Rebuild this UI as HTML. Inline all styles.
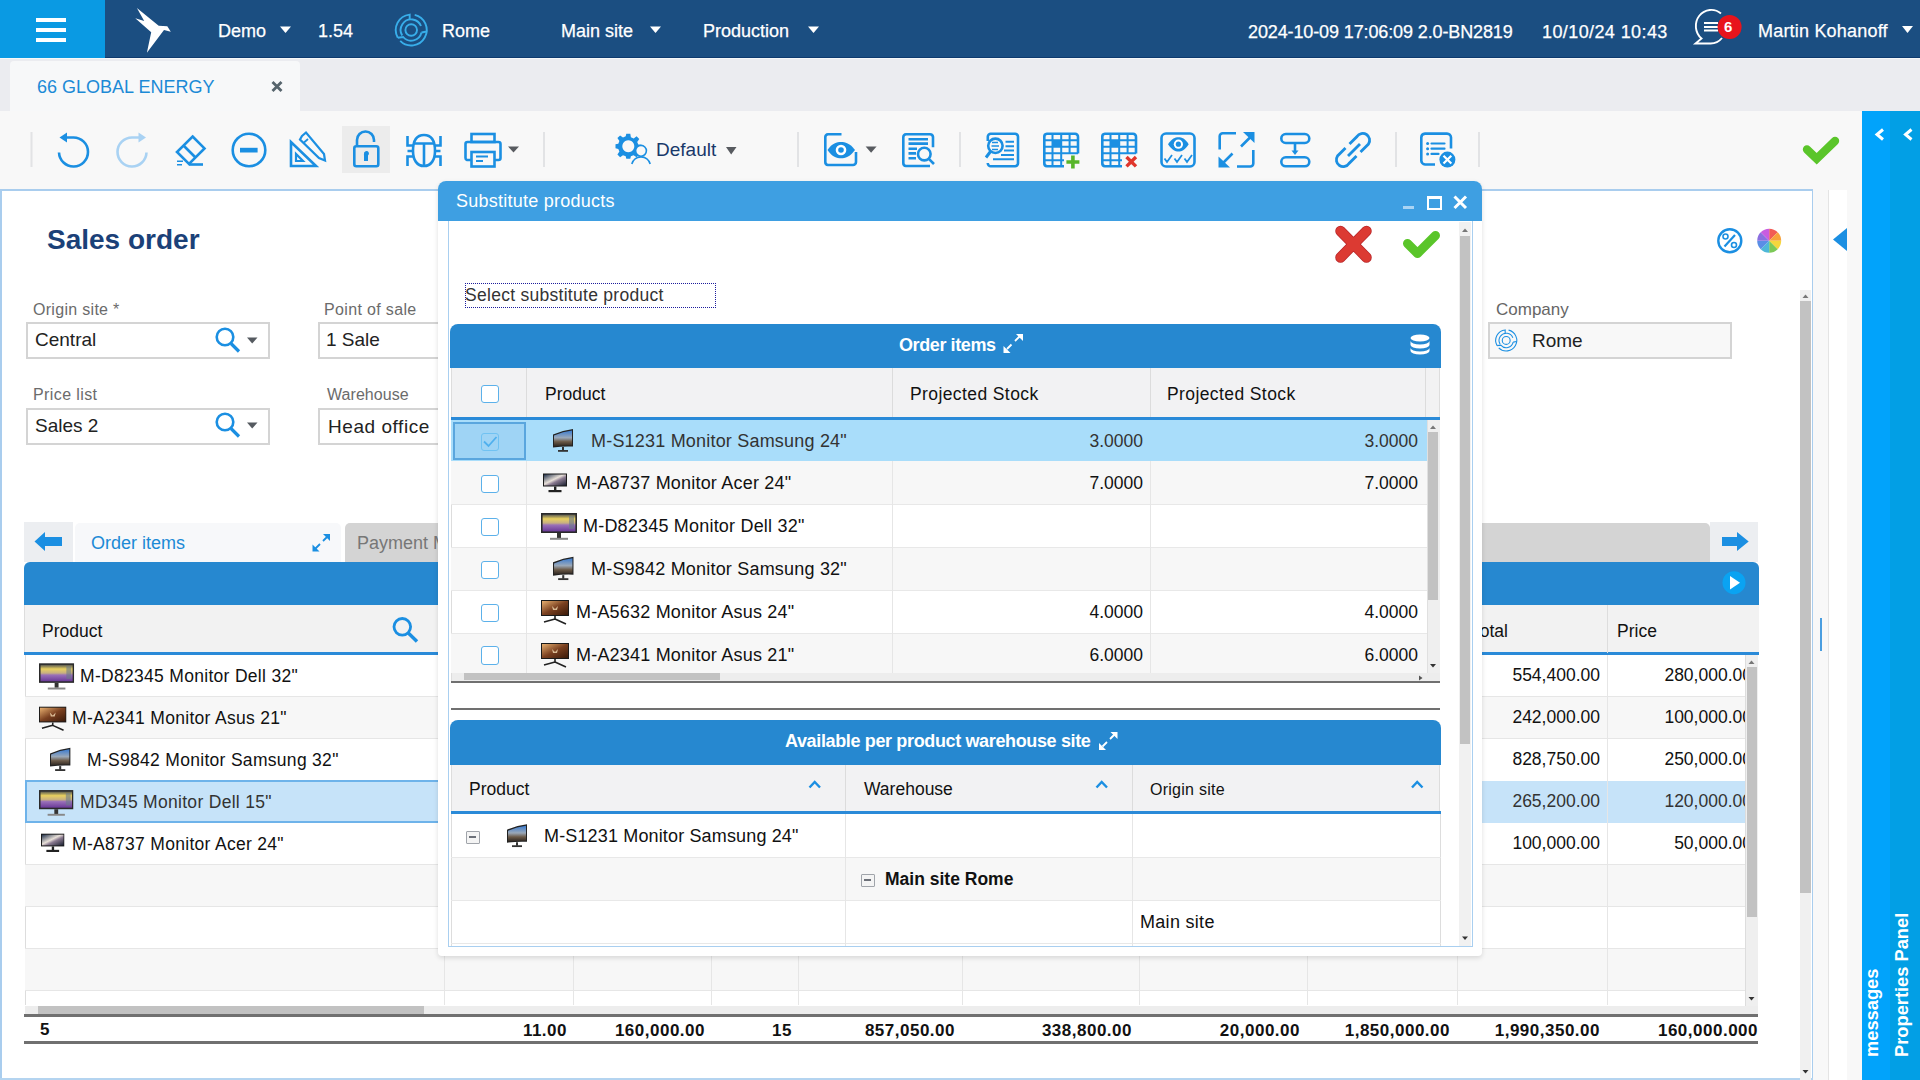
<!DOCTYPE html>
<html><head><meta charset="utf-8">
<style>
*{box-sizing:border-box;margin:0;padding:0}
html,body{width:1920px;height:1080px;overflow:hidden;background:#f7f7f7;font-family:"Liberation Sans",sans-serif;color:#222}
.a{position:absolute}
.t{position:absolute;white-space:nowrap;line-height:1}
.w{-webkit-text-stroke:0.25px #fff}
svg{position:absolute;overflow:visible}
</style></head><body>

<svg width="0" height="0" style="position:absolute">
<defs>
 <linearGradient id="gSam" x1="0" y1="0" x2="0" y2="1"><stop offset="0" stop-color="#3a7bd0"/><stop offset="0.45" stop-color="#9aa8b8"/><stop offset="0.7" stop-color="#6b5a48"/><stop offset="1" stop-color="#2a2420"/></linearGradient>
 <linearGradient id="gAcer" x1="0" y1="0" x2="1" y2="1"><stop offset="0" stop-color="#20304a"/><stop offset="0.45" stop-color="#e8e0d8"/><stop offset="0.6" stop-color="#8a7a90"/><stop offset="1" stop-color="#1a2030"/></linearGradient>
 <linearGradient id="gDell" x1="0" y1="0" x2="0" y2="1"><stop offset="0" stop-color="#5a5a50"/><stop offset="0.25" stop-color="#e8d060"/><stop offset="0.5" stop-color="#c8b080"/><stop offset="0.62" stop-color="#9a70b8"/><stop offset="1" stop-color="#6a3a98"/></linearGradient>
 <linearGradient id="gAsus" x1="0" y1="0" x2="1" y2="1"><stop offset="0" stop-color="#e8b070"/><stop offset="0.5" stop-color="#7a4020"/><stop offset="1" stop-color="#3a1a0a"/></linearGradient>
 <symbol id="mSam" viewBox="0 0 22 24"><path d="M1,5.5 Q11,1 21,0 L21,17.5 Q11,17 1,18.5 Z" fill="#222"/><path d="M2,6.5 Q11,2.5 20,1.5 L20,16.5 Q11,16.2 2,17.5 Z" fill="url(#gSam)"/><rect x="10" y="18" width="2" height="3.5" fill="#333"/><rect x="6" y="21" width="10" height="1.8" fill="#333"/></symbol>
 <symbol id="mAcer" viewBox="0 0 24 24"><rect x="0" y="3" width="24" height="13" fill="#1a1a1a"/><rect x="1" y="4" width="22" height="11" fill="url(#gAcer)"/><rect x="11" y="16" width="2.4" height="4" fill="#222"/><rect x="5.5" y="19.5" width="13" height="2.2" fill="#222"/></symbol>
 <symbol id="mDell" viewBox="0 0 36 27"><rect x="0" y="0" width="36" height="20" fill="#2a2a2a"/><rect x="1.6" y="1.6" width="32.8" height="16.8" fill="url(#gDell)"/><rect x="28" y="3" width="5" height="13" fill="#6a7a88" opacity="0.6"/><rect x="16" y="20" width="4" height="5" fill="#333"/><rect x="9" y="24.8" width="18" height="2" fill="#888"/></symbol>
 <symbol id="mAsus" viewBox="0 0 28 27"><rect x="0" y="2" width="28" height="16" fill="#1a1a1a"/><rect x="1" y="3" width="26" height="14" fill="url(#gAsus)"/><path d="M11,8 L14,11 L17,8 L16,12 L12,12 Z" fill="#f0d8b0" opacity="0.8"/><path d="M14,18 L14,21 M14,21 L3,24 M14,21 L25,26" stroke="#222" stroke-width="1.6"/></symbol>
</defs></svg>
<!-- TOP BAR -->
<div class="a" style="left:0;top:0;width:1920px;height:58px;background:#1b4e81"></div>
<div class="a" style="left:105px;top:57px;width:1815px;height:1px;background:#0e3a6e"></div>
<div class="a" style="left:0;top:0;width:105px;height:58px;background:#0a9ae3"></div>
<div class="a" style="left:36px;top:18px;width:30px;height:3.5px;background:#fff"></div>
<div class="a" style="left:36px;top:28px;width:30px;height:3.5px;background:#fff"></div>
<div class="a" style="left:36px;top:38px;width:30px;height:3.5px;background:#fff"></div>
<svg style="left:0;top:0" width="200" height="58"><path d="M136.9,8.1 L158.7,25.8 L167.3,26.3 L170.8,31.7 L164,30.1 L146.9,52.7 L151.2,32.3 L135.3,18.3 L144.2,21 Z" fill="#fff"/></svg>
<div class="t w" style="left:218px;top:22px;font-size:18px;color:#fff">Demo</div>
<svg style="left:0;top:0" width="1" height="1"><path d="M280,26.5 L291,26.5 L285.5,33 Z" fill="#fff"/></svg>
<div class="t w" style="left:318px;top:22px;font-size:18px;color:#fff">1.54</div>
<div class="t w" style="left:442px;top:22px;font-size:18px;color:#fff">Rome</div>
<div class="t w" style="left:561px;top:22px;font-size:18px;color:#fff">Main site</div>
<svg style="left:0;top:0" width="1" height="1"><path d="M650,26.5 L661,26.5 L655.5,33 Z" fill="#fff"/></svg>
<div class="t w" style="left:703px;top:22px;font-size:18px;color:#fff">Production</div>
<svg style="left:0;top:0" width="1" height="1"><path d="M808,26.5 L819,26.5 L813.5,33 Z" fill="#fff"/></svg>
<div class="t w" style="left:1248px;top:23px;font-size:18px;letter-spacing:-0.12px;color:#fff">2024-10-09 17:06:09 2.0-BN2819</div>
<div class="t w" style="left:1542px;top:23px;font-size:18px;letter-spacing:0.4px;color:#fff">10/10/24 10:43</div>
<div class="t w" style="left:1758px;top:22px;font-size:18px;letter-spacing:0.2px;color:#fff">Martin Kohanoff</div>
<svg style="left:0;top:0" width="1" height="1"><path d="M1902,26 L1913,26 L1907.5,33 Z" fill="#fff"/></svg>


<svg style="left:0;top:0" width="1920" height="58" viewBox="0 0 1920 58">
 <g fill="none" stroke="#38aeea" stroke-width="1.9" transform="translate(411.2,30)">
  <circle r="5.8"/>
  <path d="M3.5,-15.1 A15.5,15.5 0 1 1 -11,10.9"/>
  <path d="M-13.4,7.7 A15.5,15.5 0 0 1 -1.5,-15.4 L-1.5,-10.3"/>
  <path d="M10.3,2.5 A10.6,10.6 0 0 1 -8,7 L-13.4,7.7"/>
  <path d="M-9,5.5 A10.6,10.6 0 0 1 1.5,-10.5 A10.6,10.6 0 0 1 9.8,-4"/>
  <path d="M10.3,2.5 L15.5,1.5"/>
 </g>
 <!-- chat bubble -->
 <path d="M1721,13.5 A14.8,15.5 0 0 0 1701.5,38.5 L1695.5,43.5 L1710,43.5 A15,15.5 0 0 0 1722,38" fill="none" stroke="#fff" stroke-width="1.9"/>
 <path d="M1704,23 L1718,23 M1704,27 L1718,27 M1704,30.5 L1718,30.5" stroke="#fff" stroke-width="2.2"/>
 <circle cx="1729.6" cy="27" r="12" fill="#e8141c"/>
</svg>
<div class="t" style="left:1724px;top:19px;font-size:15px;font-weight:bold;color:#fff">6</div>

<!-- TAB STRIP -->
<div class="a" style="left:0;top:58px;width:1920px;height:53px;background:#ebecf0"></div>
<div class="a" style="left:0;top:58px;width:1920px;height:1px;background:#f6f8f8"></div>
<div class="a" style="left:10px;top:61px;width:290px;height:50px;background:#f7f8f9;border-radius:4px 4px 0 0"></div>
<div class="t" style="left:37px;top:78px;font-size:18px;color:#1c8ad6">66 GLOBAL ENERGY</div>
<svg style="left:0;top:0" width="1" height="1"><path d="M272.5,82 L281.5,91 M281.5,82 L272.5,91" stroke="#56646c" stroke-width="2.8"/></svg>

<!-- TOOLBAR -->
<div class="a" style="left:0;top:111px;width:1862px;height:79px;background:#f8f8f8"></div>


<svg style="left:0;top:0" width="1920" height="200" viewBox="0 0 1920 200">
<g stroke="#e2e3e5" stroke-width="2"><line x1="31.5" y1="132" x2="31.5" y2="167"/><line x1="544" y1="132" x2="544" y2="167"/><line x1="798" y1="132" x2="798" y2="167"/><line x1="960" y1="132" x2="960" y2="167"/><line x1="1396" y1="132" x2="1396" y2="167"/><line x1="1479" y1="132" x2="1479" y2="167"/></g>
<rect x="342" y="126" width="48" height="47" fill="#ececec"/>
<g fill="none" stroke="#1b8fe2" stroke-width="2.6" stroke-linecap="butt">
 <!-- undo -->
 <path d="M66,137.5 L73.5,137.5 A14.5,14.5 0 1 1 59,152.5"/>
 <!-- eraser -->
 <path d="M192.6,136.5 L204.5,148.4 L189,164 L177,152 Z"/>
 <path d="M183.5,145.5 L195.5,157.5"/>
 <path d="M189,164.5 L203,164.5"/>
 <!-- minus circle -->
 <circle cx="249" cy="150" r="16.3"/>
 <!-- ruler pencil -->
 <path d="M291,142 L291,166 L316,166 Z"/>
 <path d="M296,154 L296,161 L303,161 Z" stroke-width="2.2"/>
 <path d="M302,136 L306,132.5 L324,154 L325,160.5 L319,158 L300,139.5 Z" stroke-width="2.2"/>
 <path d="M304,142.5 L308,139" stroke-width="1.8"/>
 <!-- lock -->
 <path d="M357,146 L357,140 A8.5,8.5 0 0 1 374,140 L374,142"/>
 <rect x="354.3" y="146.3" width="24" height="20" rx="2"/>
 <!-- bug -->
 <path d="M424,135 C432,135 435,142 435,151 C435,160 431,166 424,166 C417,166 413,160 413,151 C413,142 416,135 424,135 Z"/>
 <path d="M413.5,143.5 L434.5,143.5 M424,143.5 L424,166"/>
 <path d="M407.5,136 L407.5,145.5 L413.5,145.5 M440.5,136 L440.5,145.5 L434.5,145.5 M407.5,151 L413,151 M435,151 L440.5,151 M407.5,166 L407.5,156.5 L413.5,156.5 M440.5,166 L440.5,156.5 L434.5,156.5"/>
 <!-- printer -->
 <rect x="471.5" y="134" width="23" height="8"/>
 <path d="M471,160 L467,160 A2,2 0 0 1 465.5,158 L465.5,144 A2,2 0 0 1 467.5,142 L498.5,142 A2,2 0 0 1 500.5,144 L500.5,158 A2,2 0 0 1 498.5,160 L495,160"/>
 <rect x="471.5" y="152" width="23" height="14.5"/>
 <path d="M476,156.5 L488,156.5 M476,161 L483,161" stroke-width="1.8"/>
 <!-- eye box -->
 <path d="M841.5,134.3 L828,134.3 A3,3 0 0 0 825.3,137 L825.3,162 A3,3 0 0 0 828,165 L853,165 A3,3 0 0 0 856,162 L856,152"/>
 <!-- doc search -->
 <path d="M930,166 L906,166 A3,3 0 0 1 903.3,163 L903.3,137 A3,3 0 0 1 906,134.3 L930,134.3 A3,3 0 0 1 933,137 L933,147.3"/>
 <path d="M908.5,139.2 L928,139.2 M908.5,143.6 L928,143.6 M908.5,148.7 L917,148.7 M908.5,153.4 L916,153.4 M908.5,158.2 L916,158.2"/>
 <circle cx="924.3" cy="154.1" r="6.3"/>
 <path d="M928.8,158.8 L934,164"/>
 <!-- search doc -->
 <path d="M987.8,141 L987.8,137 A3,3 0 0 1 991,133.8 L1015,133.8 A3,3 0 0 1 1018,137 L1018,163 A3,3 0 0 1 1015,166.2 L991,166.2 A3,3 0 0 1 987.8,163"/>
 <circle cx="995.4" cy="145.8" r="7.2"/>
 <path d="M990.5,151.5 L986,157.5" stroke-width="3"/>
 <path d="M992,142.5 L998,142.5 M991.5,146 L999,146 M992,149.5 L998,149.5" stroke-width="1.6"/>
 <path d="M1005.5,141.8 L1014,141.8 M1005.5,146.2 L1014,146.2 M1004,150.6 L1014,150.6 M1001,155 L1014,155 M993,159.2 L1014,159.2" stroke-width="2"/>
 <!-- grid plus -->
 <path d="M1064,166.2 L1047,166.2 A3,3 0 0 1 1044.3,163 L1044.3,137 A3,3 0 0 1 1047,133.8 L1075,133.8 A3,3 0 0 1 1078,137 L1078,153.5"/>
 <path d="M1052.5,134 L1052.5,166 M1061.2,134 L1061.2,166 M1069.6,134 L1069.6,153.5 M1044.5,140.3 L1078,140.3 M1044.5,146.8 L1078,146.8 M1044.5,153.3 L1078,153.3 M1044.5,160.2 L1064,160.2" stroke-width="2"/>
 <!-- grid x -->
 <path d="M1122,166.2 L1105,166.2 A3,3 0 0 1 1102.3,163 L1102.3,137 A3,3 0 0 1 1105,133.8 L1133,133.8 A3,3 0 0 1 1136,137 L1136,153.5"/>
 <path d="M1110.5,134 L1110.5,166 M1119.2,134 L1119.2,166 M1127.6,134 L1127.6,153.5 M1102.5,140.3 L1136,140.3 M1102.5,146.8 L1136,146.8 M1102.5,153.3 L1136,153.3 M1102.5,160.2 L1122,160.2" stroke-width="2"/>
 <!-- eye check -->
 <rect x="1161.5" y="133.5" width="33" height="33" rx="4.5"/>
 <path d="M1164.5,158.5 L1167,162 L1172,155 M1174.5,158.5 L1177,162 L1182,155 M1184.5,158.5 L1187,162 L1192,155" stroke-width="1.8"/>
 <!-- expand -->
 <path d="M1219.7,149.5 L1219.7,136 A3,3 0 0 1 1223,133.2 L1236,133.2"/>
 <path d="M1253.3,150 L1253.3,163.5 A3,3 0 0 1 1250,166.5 L1237,166.5"/>
 <path d="M1241,146.5 L1250,137.5 M1232.5,153.5 L1223.5,162.5"/>
 <!-- flow -->
 <rect x="1281.3" y="134" width="28" height="9" rx="4.5"/>
 <rect x="1281.3" y="157.3" width="28" height="9" rx="4.5"/>
 <path d="M1295,143.6 L1295,151"/>
 <!-- link -->
 <path d="M1349.5,144 L1357,136.5 A5.5,5.5 0 0 1 1368.5,144 L1360.5,152" stroke-width="2.8"/>
 <path d="M1356.5,156 L1349,163.5 A5.5,5.5 0 0 1 1337.5,156 L1345.5,148" stroke-width="2.8"/>
 <path d="M1348,156 L1360,144" stroke-width="2.8"/>
 <!-- list x -->
 <path d="M1435,164.5 L1425,164.5 A4,4 0 0 1 1421.3,160.5 L1421.3,137.5 A4,4 0 0 1 1425,133.6 L1447,133.6 A4,4 0 0 1 1451,137.5 L1451,148.5"/>
 <path d="M1431.5,143.5 L1444.5,143.5 M1431.5,148.7 L1444.5,148.7 M1431.5,153.9 L1438.5,153.9" stroke-width="2.2" stroke-linecap="round"/>
</g>
<g fill="#1b8fe2">
 <path d="M59.5,137.5 L67,132.5 L67,142.5 Z"/>
 <rect x="240" y="147.8" width="17.6" height="4.7"/>
 <path d="M177,160.5 L183,160.5 L183,162 L177,162 Z M177,164 L182,164 L182,165.5 L177,165.5 Z"/>
 <path d="M364,154 A2.5,2.5 0 1 1 368,155.5 L368,161 L364,161 L364,155.5 A2.5,2.5 0 0 1 364,154 Z"/>
 <path d="M827.5,150 C832,143 837,142 841,142 C845,142 850,143 855,150 C850,157 845,158.2 841,158.2 C837,158.2 832,157 827.5,150 Z"/>
 <rect x="1053" y="140.5" width="8" height="6.2"/>
 <rect x="1111" y="140.5" width="8" height="6.2"/>
 <path d="M1168,144.2 C1172,138.5 1175,137.3 1178.4,137.3 C1182,137.3 1185,138.5 1188.7,144.2 C1185,150 1182,151.4 1178.4,151.4 C1175,151.4 1172,150 1168,144.2 Z"/>
 <path d="M1254.5,132 L1254.5,143 L1243,132 Z"/>
 <path d="M1218.5,167.5 L1218.5,156.5 L1230,167.5 Z"/>
 <path d="M1291.5,150.5 L1298.5,150.5 L1295,155 Z"/>
 <circle cx="1427.6" cy="143.5" r="1.5"/><circle cx="1427.6" cy="148.7" r="1.5"/><circle cx="1427.6" cy="153.9" r="1.5"/>
 <circle cx="1447.4" cy="159.6" r="8"/>
</g>
<g fill="#fff">
 <circle cx="841" cy="150" r="5.3"/>
 <circle cx="1178.4" cy="144.2" r="4.6"/>
</g>
<g fill="#1b8fe2"><circle cx="841" cy="150" r="2.8"/><circle cx="1178.4" cy="144.2" r="2.6"/></g>
<path d="M1443.5,155.7 L1451.3,163.5 M1451.3,155.7 L1443.5,163.5" stroke="#fff" stroke-width="2.2"/>
<!-- plus / x colored -->
<path d="M1072.9,155.5 L1072.9,168.5 M1066.4,162 L1079.4,162" stroke="#58b52a" stroke-width="3.6"/>
<path d="M1126.5,157 L1136,166.4 M1136,157 L1126.5,166.4" stroke="#e0362c" stroke-width="3.4"/>
<!-- redo faded -->
<path d="M139.5,137.5 L132,137.5 A14.5,14.5 0 1 0 146.5,152.5" fill="none" stroke="#a9d2f3" stroke-width="2.6"/>
<path d="M146,137.5 L138.5,132.5 L138.5,142.5 Z" fill="#a9d2f3"/>
<!-- dropdown triangles -->
<g fill="#585b60"><path d="M508,146.4 L519,146.4 L513.5,152.5 Z"/><path d="M726,147 L736.5,147 L731.2,154.5 Z"/><path d="M865.6,146.6 L876.6,146.6 L871.1,152.8 Z"/></g>
<!-- gear person -->
<g transform="translate(628.3,146.3)">
 <path fill="#1b8fe2" fill-rule="evenodd" d="M-2,-12.5 L2,-12.5 L2.6,-9 L5.4,-7.8 L8.3,-10 L11,-7.3 L8.9,-4.4 L10,-1.7 L13,-1.5 L13,2 L10,2.6 L9,5.3 L10.9,8.2 L8.2,10.9 L5.3,8.9 L2.6,10 L2,12.5 L-2,12.5 L-2.6,10 L-5.3,8.9 L-8.2,10.9 L-10.9,8.2 L-8.9,5.3 L-10,2.6 L-12.8,2 L-12.8,-2 L-10,-2.6 L-8.9,-5.3 L-10.9,-8.2 L-8.2,-10.9 L-5.3,-8.9 L-2.6,-10 Z M0,-6 A6,6 0 1 0 0.01,-6 Z"/>
</g>
<circle cx="641" cy="150.8" r="5.4" fill="#f8f8f8" stroke="#1b8fe2" stroke-width="1.6"/>
<path d="M631.8,164 A9.5,9.5 0 0 1 650.2,164" fill="none" stroke="#1b8fe2" stroke-width="1.6"/>
<!-- green check -->
<path d="M1807,149.5 L1816.7,158.7 L1835,141" fill="none" stroke="#5ac52a" stroke-width="8.4" stroke-linecap="round" stroke-linejoin="miter"/>
</svg>
<div class="t" style="left:656px;top:139.5px;font-size:19px;color:#18386a">Default</div>


<!-- MAIN PANEL -->
<div class="a" style="left:0;top:189px;width:1813px;height:891px;background:#fff;border:solid #a9cdee;border-width:2px 1px 0 2px"></div>
<div class="t" style="left:47px;top:226px;font-size:28px;font-weight:bold;color:#1b4178">Sales order</div>
<!-- fields -->
<div class="t" style="left:33px;top:302px;font-size:16px;letter-spacing:0.3px;color:#6b6b6b">Origin site *</div>
<div class="a" style="left:26px;top:322px;width:244px;height:37px;border:2px solid #d4d4d4;background:#fff"></div>
<div class="t" style="left:35px;top:330px;font-size:19px;color:#222">Central</div>
<div class="t" style="left:324px;top:302px;font-size:16px;letter-spacing:0.35px;color:#6b6b6b">Point of sale</div>
<div class="a" style="left:318px;top:322px;width:130px;height:37px;border:2px solid #d4d4d4;border-right:0;background:#fff"></div>
<div class="t" style="left:326px;top:330px;font-size:19px;color:#222">1 Sale</div>
<div class="t" style="left:33px;top:387px;font-size:16px;letter-spacing:0.4px;color:#6b6b6b">Price list</div>
<div class="a" style="left:26px;top:408px;width:244px;height:37px;border:2px solid #d4d4d4;background:#fff"></div>
<div class="t" style="left:35px;top:416px;font-size:19px;color:#222">Sales 2</div>
<div class="t" style="left:327px;top:387px;font-size:16px;letter-spacing:0.05px;color:#6b6b6b">Warehouse</div>
<div class="a" style="left:318px;top:408px;width:130px;height:37px;border:2px solid #d4d4d4;border-right:0;background:#fff"></div>
<div class="t" style="left:328px;top:417px;font-size:19px;letter-spacing:0.55px;color:#222">Head office</div>
<div class="t" style="left:1496px;top:301px;font-size:17px;color:#666">Company</div>
<div class="a" style="left:1488px;top:322px;width:244px;height:37px;border:2px solid #d4d4d4;background:#f8f8f8"></div>
<svg style="left:0;top:0" width="1" height="1"><g fill="none" stroke="#1b8fe2" stroke-width="1.6" transform="translate(1506.2,340.4) scale(0.68)">
  <circle r="5.8"/>
  <path d="M3.5,-15.1 A15.5,15.5 0 1 1 -11,10.9"/>
  <path d="M-13.4,7.7 A15.5,15.5 0 0 1 -1.5,-15.4 L-1.5,-10.3"/>
  <path d="M10.3,2.5 A10.6,10.6 0 0 1 -8,7 L-13.4,7.7"/>
  <path d="M-9,5.5 A10.6,10.6 0 0 1 1.5,-10.5 A10.6,10.6 0 0 1 9.8,-4"/>
  <path d="M10.3,2.5 L15.5,1.5"/>
 </g></svg>
<div class="t" style="left:1532px;top:331px;font-size:19px;color:#222">Rome</div>
<svg style="left:0;top:0" width="1920" height="1080" viewBox="0 0 1920 1080">
 <g fill="none" stroke="#1b8fe2" stroke-width="2.6">
  <circle cx="225" cy="337" r="8.3"/><path d="M231,343.5 L239,351.5" stroke-width="3.2"/>
  <circle cx="225" cy="422" r="8.3"/><path d="M231,428.5 L239,436.5" stroke-width="3.2"/>
 </g>
 <g fill="#555a60"><path d="M247,337.5 L257.5,337.5 L252.2,343.5 Z"/><path d="M247,422.5 L257.5,422.5 L252.2,428.5 Z"/></g>
 <!-- % icon -->
 <circle cx="1729.8" cy="240.7" r="11.5" fill="none" stroke="#1b8fe2" stroke-width="2.4"/>
 <path d="M1735,235 L1724.5,246.5" stroke="#1b8fe2" stroke-width="2.2"/>
 <circle cx="1725.5" cy="236.5" r="2.5" fill="none" stroke="#1b8fe2" stroke-width="1.6"/>
 <circle cx="1734" cy="245" r="2.5" fill="none" stroke="#1b8fe2" stroke-width="1.6"/>
 <!-- color wheel -->
 <g transform="translate(1769.2,240.7)">
  <path d="M0,0 L0,-12 A12,12 0 0 1 8.5,-8.5 Z" fill="#f25c54"/>
  <path d="M0,0 L8.5,-8.5 A12,12 0 0 1 12,0 Z" fill="#f7a23b"/>
  <path d="M0,0 L12,0 A12,12 0 0 1 8.5,8.5 Z" fill="#f5d63d"/>
  <path d="M0,0 L8.5,8.5 A12,12 0 0 1 0,12 Z" fill="#7cc957"/>
  <path d="M0,0 L0,12 A12,12 0 0 1 -8.5,8.5 Z" fill="#4fb8d8"/>
  <path d="M0,0 L-8.5,8.5 A12,12 0 0 1 -12,0 Z" fill="#5a8ee6"/>
  <path d="M0,0 L-12,0 A12,12 0 0 1 -8.5,-8.5 Z" fill="#8b6fe0"/>
  <path d="M0,0 L-8.5,-8.5 A12,12 0 0 1 0,-12 Z" fill="#c95ce0"/>
 </g>
</svg>
<div class="a" style="left:0;top:1078px;width:1813px;height:2px;background:#b4d4f0"></div>
<!-- main panel scrollbar -->
<div class="a" style="left:1800px;top:290px;width:11px;height:790px;background:#f0f0f0"></div>
<div class="a" style="left:1800px;top:301px;width:11px;height:592px;background:#c2c2c2"></div>

<!-- right strip -->
<div class="a" style="left:1813px;top:190px;width:49px;height:890px;background:#f8f8f8"></div>
<div class="a" style="left:1828px;top:190px;width:19px;height:890px;background:#fff;border-left:1px solid #e4e4e4"></div>
<svg style="left:0;top:0" width="1" height="1"><path d="M1833,239.5 L1847,228 L1847,251 Z" fill="#1b8fe2"/></svg>
<div class="a" style="left:1820px;top:618px;width:2px;height:33px;background:#4a9ee0"></div>

<!-- main grid: tabs -->
<div class="a" style="left:24px;top:522px;width:49px;height:40px;background:#eceef1"></div>
<svg style="left:0;top:0" width="1" height="1"><path d="M34.5,541.5 L45,532 L45,537 L62,537 L62,546 L45,546 L45,551 Z" fill="#1b8fe2"/></svg>
<div class="a" style="left:75px;top:523px;width:266px;height:39px;background:#f7f8fa;border-radius:5px 5px 0 0"></div>
<div class="t" style="left:91px;top:534px;font-size:18px;color:#1b8ad6">Order items</div>
<svg style="left:0;top:0" width="1" height="1"><g stroke="#1b8fe2" stroke-width="1.8" fill="none"><path d="M315.5,548.5 L320,544 M323,541 L327.5,536.5"/></g><g fill="#1b8fe2"><path d="M330,534 L330,541 L323,534 Z"/><path d="M312.5,551.5 L312.5,544.5 L319.5,551.5 Z"/></g></svg>
<div class="a" style="left:345px;top:523px;width:1365px;height:39px;background:#d4d4d4;border-radius:5px 5px 0 0"></div>
<div class="t" style="left:357px;top:534px;font-size:18px;color:#777">Payment Method</div>
<div class="a" style="left:1710px;top:522px;width:48px;height:40px;background:#eceef1"></div>
<svg style="left:0;top:0" width="1" height="1"><path d="M1748.7,541.5 L1737,532 L1737,537 L1722,537 L1722,546 L1737,546 L1737,551 Z" fill="#1b8fe2"/></svg>
<!-- grid header -->
<div class="a" style="left:24px;top:562px;width:1735px;height:43px;background:#2688d0;border-radius:6px 6px 0 0"></div>
<svg style="left:0;top:0" width="1" height="1"><circle cx="1734" cy="582.7" r="11.5" fill="#0aa3f2"/><path d="M1730,576 L1740,582.7 L1730,589.4 Z" fill="#fff"/></svg>
<!-- column header row -->
<div class="a" style="left:24px;top:605px;width:1735px;height:48px;background:#f2f2f2;border-left:1px solid #ddd"></div>
<div class="a" style="left:24px;top:652px;width:1735px;height:3px;background:#2a8ad8"></div>
<div class="t" style="left:42px;top:623px;font-size:17.5px;color:#111">Product</div>
<svg style="left:0;top:0" width="1" height="1"><g fill="none" stroke="#1b8fe2" stroke-width="2.8"><circle cx="402.3" cy="626.8" r="8.3"/><path d="M408.3,633 L417,641.5" stroke-width="3.4"/></g></svg>
<div class="t" style="left:1471px;top:623px;font-size:17.5px;color:#111">Total</div>
<div class="a" style="left:1607px;top:605px;width:1px;height:48px;background:#ddd"></div>
<div class="t" style="left:1617px;top:623px;font-size:17.5px;color:#111">Price</div>
<!-- rows -->
<div class="a" style="left:25px;top:655px;width:1720px;height:350px;background:#fff;border-left:1px solid #ddd"></div>
<div class="a" style="left:25px;top:697px;width:1720px;height:42px;background:#f7f7f7"></div>
<div class="a" style="left:25px;top:781px;width:1720px;height:42px;background:#c6e3f9"></div>
<div class="a" style="left:25px;top:780px;width:420px;height:43px;border:2px solid #6eb3ea;border-right:0"></div>
<div class="a" style="left:25px;top:865px;width:1720px;height:42px;background:#f7f7f7"></div>
<div class="a" style="left:25px;top:949px;width:1720px;height:42px;background:#f7f7f7"></div>
<div class="a" style="left:25px;top:696px;width:1720px;height:1px;background:#e6e6e6"></div>
<div class="a" style="left:25px;top:738px;width:1720px;height:1px;background:#e6e6e6"></div>
<div class="a" style="left:25px;top:864px;width:1720px;height:1px;background:#e6e6e6"></div>
<div class="a" style="left:25px;top:906px;width:1720px;height:1px;background:#e6e6e6"></div>
<div class="a" style="left:25px;top:948px;width:1720px;height:1px;background:#e6e6e6"></div>
<div class="a" style="left:25px;top:990px;width:1720px;height:1px;background:#e6e6e6"></div>
<div class="a" style="left:444px;top:655px;width:1px;height:350px;background:#e6e6e6"></div>
<div class="a" style="left:573px;top:655px;width:1px;height:350px;background:#e6e6e6"></div>
<div class="a" style="left:711px;top:655px;width:1px;height:350px;background:#e6e6e6"></div>
<div class="a" style="left:798px;top:655px;width:1px;height:350px;background:#e6e6e6"></div>
<div class="a" style="left:962px;top:655px;width:1px;height:350px;background:#e6e6e6"></div>
<div class="a" style="left:1139px;top:655px;width:1px;height:350px;background:#e6e6e6"></div>
<div class="a" style="left:1307px;top:655px;width:1px;height:350px;background:#e6e6e6"></div>
<div class="a" style="left:1457px;top:655px;width:1px;height:350px;background:#e6e6e6"></div>
<div class="a" style="left:1607px;top:655px;width:1px;height:350px;background:#e6e6e6"></div>

<!-- monitors main grid -->
<svg style="left:38.8px;top:663px" width="35.2" height="27"><use href="#mDell"/></svg>
<svg style="left:38.7px;top:704px" width="27.5" height="28"><use href="#mAsus"/></svg>
<svg style="left:48.6px;top:747px" width="22.4" height="26"><use href="#mSam"/></svg>
<svg style="left:38.7px;top:789px" width="34.5" height="28"><use href="#mDell"/></svg>
<svg style="left:40.5px;top:830px" width="23.5" height="25"><use href="#mAcer"/></svg>
<!-- row texts -->
<div class="t" style="left:80px;top:668px;font-size:17.5px;letter-spacing:0.3px;color:#111">M-D82345 Monitor Dell 32"</div>
<div class="t" style="left:72px;top:710px;font-size:17.5px;letter-spacing:0.3px;color:#111">M-A2341 Monitor Asus 21"</div>
<div class="t" style="left:87px;top:752px;font-size:17.5px;letter-spacing:0.3px;color:#111">M-S9842 Monitor Samsung 32"</div>
<div class="t" style="left:80px;top:794px;font-size:17.5px;letter-spacing:0.3px;color:#333">MD345 Monitor Dell 15"</div>
<div class="t" style="left:72px;top:836px;font-size:17.5px;letter-spacing:0.3px;color:#111">M-A8737 Monitor Acer 24"</div>
<div class="t" style="left:1480px;top:667px;width:120px;text-align:right;font-size:17.5px;color:#111">554,400.00</div>
<div class="t" style="left:1480px;top:709px;width:120px;text-align:right;font-size:17.5px;color:#111">242,000.00</div>
<div class="t" style="left:1480px;top:751px;width:120px;text-align:right;font-size:17.5px;color:#111">828,750.00</div>
<div class="t" style="left:1480px;top:793px;width:120px;text-align:right;font-size:17.5px;color:#333">265,200.00</div>
<div class="t" style="left:1480px;top:835px;width:120px;text-align:right;font-size:17.5px;color:#111">100,000.00</div>
<div class="a" style="left:1608px;top:655px;width:139px;height:350px;overflow:hidden">
<div class="t" style="left:0;top:12px;width:144px;text-align:right;font-size:17.5px;color:#111">280,000.00</div>
<div class="t" style="left:0;top:54px;width:144px;text-align:right;font-size:17.5px;color:#111">100,000.00</div>
<div class="t" style="left:0;top:96px;width:144px;text-align:right;font-size:17.5px;color:#111">250,000.00</div>
<div class="t" style="left:0;top:138px;width:144px;text-align:right;font-size:17.5px;color:#333">120,000.00</div>
<div class="t" style="left:0;top:180px;width:144px;text-align:right;font-size:17.5px;color:#111">50,000.00</div>
</div>
<!-- grid v scrollbar -->
<div class="a" style="left:1745px;top:655px;width:13px;height:351px;background:#efefef;border-left:1px solid #ddd"></div>
<div class="a" style="left:1747px;top:667px;width:10px;height:250px;background:#c2c2c2"></div>
<svg style="left:0;top:0" width="1" height="1"><path d="M1748.5,664 L1751.5,660.5 L1754.5,664 Z" fill="#777"/><path d="M1748.5,997 L1754.5,997 L1751.5,1000.5 Z" fill="#333"/></svg>
<!-- h scrollbar -->
<div class="a" style="left:25px;top:1006px;width:1733px;height:8px;background:#ededed"></div>
<div class="a" style="left:38px;top:1006px;width:386px;height:8px;background:#c2c2c2"></div>
<!-- footer -->
<div class="a" style="left:24px;top:1014px;width:1734px;height:30px;background:#fff;border-top:3px solid #707070;border-bottom:3px solid #707070"></div>
<div class="t" style="left:40px;top:1021px;font-size:17px;font-weight:bold;letter-spacing:0.5px;color:#111">5</div>
<div class="t" style="left:467px;top:1022px;width:100px;text-align:right;font-size:17px;font-weight:bold;letter-spacing:0.5px;color:#111">11.00</div>
<div class="t" style="left:555px;top:1022px;width:150px;text-align:right;font-size:17px;font-weight:bold;letter-spacing:0.5px;color:#111">160,000.00</div>
<div class="t" style="left:692px;top:1022px;width:100px;text-align:right;font-size:17px;font-weight:bold;letter-spacing:0.5px;color:#111">15</div>
<div class="t" style="left:805px;top:1022px;width:150px;text-align:right;font-size:17px;font-weight:bold;letter-spacing:0.5px;color:#111">857,050.00</div>
<div class="t" style="left:982px;top:1022px;width:150px;text-align:right;font-size:17px;font-weight:bold;letter-spacing:0.5px;color:#111">338,800.00</div>
<div class="t" style="left:1150px;top:1022px;width:150px;text-align:right;font-size:17px;font-weight:bold;letter-spacing:0.5px;color:#111">20,000.00</div>
<div class="t" style="left:1300px;top:1022px;width:150px;text-align:right;font-size:17px;font-weight:bold;letter-spacing:0.5px;color:#111">1,850,000.00</div>
<div class="t" style="left:1450px;top:1022px;width:150px;text-align:right;font-size:17px;font-weight:bold;letter-spacing:0.5px;color:#111">1,990,350.00</div>
<div class="t" style="left:1608px;top:1022px;width:150px;text-align:right;font-size:17px;font-weight:bold;letter-spacing:0.5px;color:#111">160,000.000</div>
<svg style="left:0;top:0" width="1" height="1"><path d="M1802.5,1070 L1808.5,1070 L1805.5,1073.5 Z" fill="#333"/><path d="M1802.5,298 L1805.5,294.5 L1808.5,298 Z" fill="#777"/></svg>


<!-- MODAL -->
<div class="a" style="left:438px;top:181px;width:1044px;height:775px;background:#fff;border-radius:8px 8px 4px 4px;box-shadow:0 2px 5px rgba(0,0,0,0.13)"></div>
<div class="a" style="left:438px;top:181px;width:1044px;height:40px;background:#3e9fe2;border-radius:8px 8px 0 0"></div>
<div class="t" style="left:456px;top:192px;font-size:18px;letter-spacing:0.25px;color:#fff">Substitute products</div>
<div class="a" style="left:1403px;top:206px;width:11px;height:3px;background:#a9d4f4"></div>
<div class="a" style="left:1427px;top:196px;width:14.5px;height:13.5px;border:solid #fff;border-width:3px 2px 2px 2px"></div>
<svg style="left:0;top:0" width="1" height="1"><path d="M1454.5,196.5 L1466,208 M1466,196.5 L1454.5,208" stroke="#fff" stroke-width="3"/></svg>
<div class="a" style="left:448px;top:221px;width:1025px;height:726px;border:1px solid #a9cff0;border-top:0;background:#fff"></div>
<!-- modal scrollbar -->
<div class="a" style="left:1459px;top:222px;width:12px;height:724px;background:#f1f1f1"></div>
<div class="a" style="left:1460px;top:236px;width:10px;height:508px;background:#c2c2c2"></div>
<svg style="left:0;top:0" width="1" height="1"><path d="M1462,232 L1465,228.5 L1468,232 Z" fill="#777"/><path d="M1462,936.5 L1468,936.5 L1465,940 Z" fill="#333"/></svg>
<!-- red x / green check -->
<svg style="left:0;top:0" width="1" height="1">
 <path d="M1340.5,231 L1366.5,257.5 M1366.5,231 L1340.5,257.5" stroke="#b8262a" stroke-width="10.5" stroke-linecap="round"/>
 <path d="M1340.5,231 L1366.5,257.5 M1366.5,231 L1340.5,257.5" stroke="#dc3a32" stroke-width="9" stroke-linecap="round"/>
 <path d="M1407.5,243.5 L1417.5,253.5 L1435.5,235.5" fill="none" stroke="#5ac52a" stroke-width="9" stroke-linecap="round" stroke-linejoin="round"/>
</svg>
<div class="a" style="left:465px;top:283px;width:251px;height:25px;border:1px dotted #1c1c9c"></div>
<div class="t" style="left:465px;top:287px;font-size:17.5px;letter-spacing:0.28px;color:#333">Select substitute product</div>

<!-- ORDER ITEMS GRID -->
<div class="a" style="left:450px;top:324px;width:991px;height:44px;background:#2688d0;border-radius:8px 8px 0 0"></div>
<div class="t" style="left:899px;top:336px;font-size:18px;font-weight:bold;letter-spacing:-0.4px;color:#fff">Order items</div>
<svg style="left:0;top:0" width="1" height="1"><g stroke="#fff" stroke-width="1.8" fill="none"><path d="M1007,349 L1011.5,344.5 M1015,341 L1019.5,336.5"/></g><g fill="#fff"><path d="M1023,334 L1023,341 L1016,334 Z"/><path d="M1003.5,353 L1003.5,346 L1010.5,353 Z"/></g>
<g fill="#fff"><ellipse cx="1420" cy="338" rx="9.5" ry="3.5"/><path d="M1410.5,341 A9.5,3.5 0 0 0 1429.5,341 L1429.5,345 A9.5,3.5 0 0 1 1410.5,345 Z"/><path d="M1410.5,348 A9.5,3.5 0 0 0 1429.5,348 L1429.5,351 A9.5,3.5 0 0 1 1410.5,351 Z"/></g></svg>
<div class="a" style="left:451px;top:368px;width:989px;height:49px;background:#f2f2f3;border-left:1px solid #ddd;border-right:1px solid #ddd"></div>
<div class="a" style="left:526px;top:368px;width:1px;height:49px;background:#dcdcdc"></div>
<div class="a" style="left:892px;top:368px;width:1px;height:49px;background:#dcdcdc"></div>
<div class="a" style="left:1150px;top:368px;width:1px;height:49px;background:#dcdcdc"></div>
<div class="a" style="left:1425px;top:368px;width:1px;height:49px;background:#dcdcdc"></div>
<div class="a" style="left:480.5px;top:384.5px;width:18.5px;height:18.5px;border:1.6px solid #5cb1ea;border-radius:3px;background:#fff"></div>
<div class="t" style="left:545px;top:386px;font-size:17.5px;color:#111">Product</div>
<div class="t" style="left:910px;top:386px;font-size:17.5px;letter-spacing:0.4px;color:#111">Projected Stock</div>
<div class="t" style="left:1167px;top:386px;font-size:17.5px;letter-spacing:0.4px;color:#111">Projected Stock</div>
<div class="a" style="left:451px;top:417px;width:989px;height:3.5px;background:#2a8ad8"></div>
<!-- rows -->
<div class="a" style="left:451px;top:420px;width:977px;height:253px;background:#fff;border-left:1px solid #ddd"></div>
<div class="a" style="left:451px;top:420px;width:977px;height:41px;background:#a9ddfa"></div>
<div class="a" style="left:453px;top:422px;width:73px;height:38px;border:2px solid #5aa6de;background:#9fd4f5"></div>
<div class="a" style="left:451px;top:461px;width:977px;height:43px;background:#f7f7f7"></div>
<div class="a" style="left:451px;top:547px;width:977px;height:43px;background:#f7f7f7"></div>
<div class="a" style="left:451px;top:633px;width:977px;height:40px;background:#f7f7f7"></div>
<div class="a" style="left:451px;top:503.5px;width:977px;height:1px;background:#e8e8e8"></div>
<div class="a" style="left:451px;top:546.5px;width:977px;height:1px;background:#e8e8e8"></div>
<div class="a" style="left:451px;top:589.5px;width:977px;height:1px;background:#e8e8e8"></div>
<div class="a" style="left:451px;top:632.5px;width:977px;height:1px;background:#e8e8e8"></div>
<div class="a" style="left:526px;top:461px;width:1px;height:212px;background:#e6e6e6"></div>
<div class="a" style="left:892px;top:461px;width:1px;height:212px;background:#e6e6e6"></div>
<div class="a" style="left:1150px;top:461px;width:1px;height:212px;background:#e6e6e6"></div>
<div class="a" style="left:480.5px;top:432.5px;width:18.5px;height:18.5px;border:1.6px solid #70c2f2;border-radius:3px"></div>
<svg style="left:0;top:0" width="1" height="1"><path d="M484,441.5 L488.5,446 L496.5,437" fill="none" stroke="#50b0ee" stroke-width="1.8"/></svg>
<div class="a" style="left:480.5px;top:474.5px;width:18.5px;height:18.5px;border:1.6px solid #5cb1ea;border-radius:3px;background:#fff"></div>
<div class="a" style="left:480.5px;top:517.5px;width:18.5px;height:18.5px;border:1.6px solid #5cb1ea;border-radius:3px;background:#fff"></div>
<div class="a" style="left:480.5px;top:560.5px;width:18.5px;height:18.5px;border:1.6px solid #5cb1ea;border-radius:3px;background:#fff"></div>
<div class="a" style="left:480.5px;top:603.5px;width:18.5px;height:18.5px;border:1.6px solid #5cb1ea;border-radius:3px;background:#fff"></div>
<div class="a" style="left:480.5px;top:646px;width:18.5px;height:18.5px;border:1.6px solid #5cb1ea;border-radius:3px;background:#fff"></div>

<svg style="left:552px;top:429px" width="22" height="24"><use href="#mSam"/></svg>
<svg style="left:543px;top:470px" width="24" height="25"><use href="#mAcer"/></svg>
<svg style="left:541px;top:513px" width="36" height="27"><use href="#mDell"/></svg>
<svg style="left:551.7px;top:556px" width="22.5" height="26"><use href="#mSam"/></svg>
<svg style="left:541px;top:598px" width="28" height="27"><use href="#mAsus"/></svg>
<svg style="left:541px;top:641px" width="28" height="27"><use href="#mAsus"/></svg>
<div class="t" style="left:591px;top:432px;font-size:18px;letter-spacing:0.2px;color:#333">M-S1231 Monitor Samsung 24"</div>
<div class="t" style="left:576px;top:474px;font-size:18px;letter-spacing:0.2px;color:#111">M-A8737 Monitor Acer 24"</div>
<div class="t" style="left:583px;top:517px;font-size:18px;letter-spacing:0.2px;color:#111">M-D82345 Monitor Dell 32"</div>
<div class="t" style="left:591px;top:560px;font-size:18px;letter-spacing:0.2px;color:#111">M-S9842 Monitor Samsung 32"</div>
<div class="t" style="left:576px;top:603px;font-size:18px;letter-spacing:0.2px;color:#111">M-A5632 Monitor Asus 24"</div>
<div class="t" style="left:576px;top:646px;font-size:18px;letter-spacing:0.2px;color:#111">M-A2341 Monitor Asus 21"</div>
<div class="t" style="left:1000px;top:433px;width:143px;text-align:right;font-size:17.5px;color:#333">3.0000</div>
<div class="t" style="left:1275px;top:433px;width:143px;text-align:right;font-size:17.5px;color:#333">3.0000</div>
<div class="t" style="left:1000px;top:475px;width:143px;text-align:right;font-size:17.5px;color:#111">7.0000</div>
<div class="t" style="left:1275px;top:475px;width:143px;text-align:right;font-size:17.5px;color:#111">7.0000</div>
<div class="t" style="left:1000px;top:604px;width:143px;text-align:right;font-size:17.5px;color:#111">4.0000</div>
<div class="t" style="left:1275px;top:604px;width:143px;text-align:right;font-size:17.5px;color:#111">4.0000</div>
<div class="t" style="left:1000px;top:647px;width:143px;text-align:right;font-size:17.5px;color:#111">6.0000</div>
<div class="t" style="left:1275px;top:647px;width:143px;text-align:right;font-size:17.5px;color:#111">6.0000</div>
<!-- grid scrollbar -->
<div class="a" style="left:1427px;top:420px;width:13px;height:253px;background:#efefef;border-left:1px solid #e0e0e0"></div>
<div class="a" style="left:1428px;top:432px;width:10px;height:168px;background:#c2c2c2"></div>
<svg style="left:0;top:0" width="1" height="1"><path d="M1430,429 L1433,425.5 L1436,429 Z" fill="#777"/><path d="M1430,664 L1436,664 L1433,667.5 Z" fill="#333"/></svg>
<div class="a" style="left:451px;top:673px;width:989px;height:8px;background:#ededed;border-left:1px solid #ddd"></div>
<div class="a" style="left:464px;top:673px;width:256px;height:7px;background:#c2c2c2"></div>
<svg style="left:0;top:0" width="1" height="1"><path d="M1419,675.5 L1422.5,678 L1419,680.5 Z" fill="#555"/></svg>
<div class="a" style="left:451px;top:681px;width:989px;height:29px;background:#fff;border-top:2.5px solid #707070;border-bottom:2.5px solid #707070"></div>

<!-- AVAILABLE GRID -->
<div class="a" style="left:450px;top:720px;width:991px;height:45px;background:#2688d0;border-radius:8px 8px 0 0"></div>
<div class="t" style="left:785px;top:732px;font-size:18px;font-weight:bold;letter-spacing:-0.36px;color:#fff">Available per product warehouse site</div>
<svg style="left:0;top:0" width="1" height="1"><g stroke="#fff" stroke-width="1.8" fill="none"><path d="M1102.5,746.5 L1107,742 M1110,739 L1114.5,734.5"/></g><g fill="#fff"><path d="M1117.5,732 L1117.5,739 L1110.5,732 Z"/><path d="M1099,750 L1099,743 L1106,750 Z"/></g></svg>
<div class="a" style="left:451px;top:765px;width:989px;height:46px;background:#f2f2f3;border-left:1px solid #ddd;border-right:1px solid #ddd"></div>
<div class="a" style="left:845px;top:765px;width:1px;height:46px;background:#dcdcdc"></div>
<div class="a" style="left:1132px;top:765px;width:1px;height:46px;background:#dcdcdc"></div>
<div class="t" style="left:469px;top:781px;font-size:17.5px;color:#111">Product</div>
<div class="t" style="left:864px;top:781px;font-size:17.5px;color:#111">Warehouse</div>
<div class="t" style="left:1150px;top:782px;font-size:16px;letter-spacing:0.25px;color:#111">Origin site</div>
<svg style="left:0;top:0" width="1" height="1"><g fill="none" stroke="#1b8fe2" stroke-width="2.4"><path d="M809.5,787.5 L814.7,782 L820,787.5"/><path d="M1096.5,787.5 L1101.7,782 L1107,787.5"/><path d="M1412,787.5 L1417.2,782 L1422.5,787.5"/></g></svg>
<div class="a" style="left:451px;top:811px;width:990px;height:3.5px;background:#2a8ad8"></div>
<div class="a" style="left:451px;top:814px;width:990px;height:132px;background:#fff;border-left:1px solid #ddd;border-right:1px solid #ddd"></div>
<div class="a" style="left:451px;top:857px;width:990px;height:43px;background:#f7f7f7;border-left:1px solid #ddd;border-right:1px solid #ddd"></div>
<div class="a" style="left:451px;top:856.5px;width:990px;height:1px;background:#e8e8e8"></div>
<div class="a" style="left:451px;top:899.5px;width:990px;height:1px;background:#e8e8e8"></div>
<div class="a" style="left:451px;top:942.5px;width:990px;height:1px;background:#e8e8e8"></div>
<div class="a" style="left:845px;top:814px;width:1px;height:132px;background:#e6e6e6"></div>
<div class="a" style="left:1132px;top:814px;width:1px;height:132px;background:#e6e6e6"></div>
<div class="a" style="left:465.5px;top:830.5px;width:14px;height:13px;border:1.5px solid #a0a4aa;background:#f4f4f4;border-radius:1px"></div>
<div class="a" style="left:469px;top:836.3px;width:7px;height:2px;background:#6c7078"></div>
<div class="a" style="left:860.5px;top:873.5px;width:14px;height:13px;border:1.5px solid #a0a4aa;background:#f4f4f4;border-radius:1px"></div>
<div class="a" style="left:864px;top:879.3px;width:7px;height:2px;background:#6c7078"></div>
<svg style="left:506.4px;top:824px" width="22" height="24.5"><use href="#mSam"/></svg>
<div class="t" style="left:544px;top:827px;font-size:18px;letter-spacing:0.15px;color:#111">M-S1231 Monitor Samsung 24"</div>
<div class="t" style="left:885px;top:871px;font-size:17.5px;font-weight:bold;color:#111">Main site Rome</div>
<div class="t" style="left:1140px;top:913px;font-size:18px;letter-spacing:0.3px;color:#111">Main site</div>

<!-- RIGHT BLUE PANEL -->
<div class="a" style="left:1862px;top:111px;width:28px;height:969px;background:#01a3fb"></div>
<div class="a" style="left:1890px;top:111px;width:30px;height:969px;background:#029fe5"></div>
<svg style="left:0;top:0" width="1" height="1"><path d="M1883,129.5 L1877,134.5 L1883,139.5 M1911.5,129.5 L1905.5,134.5 L1911.5,139.5" fill="none" stroke="#fff" stroke-width="3"/></svg>
<div class="t" style="left:1863px;top:1057px;font-size:18.3px;font-weight:bold;color:#fff;transform:rotate(-90deg);transform-origin:0 0">messages</div>
<div class="t" style="left:1892.5px;top:1057px;font-size:18.3px;font-weight:bold;color:#fff;transform:rotate(-90deg);transform-origin:0 0">Properties Panel</div>
</body></html>
